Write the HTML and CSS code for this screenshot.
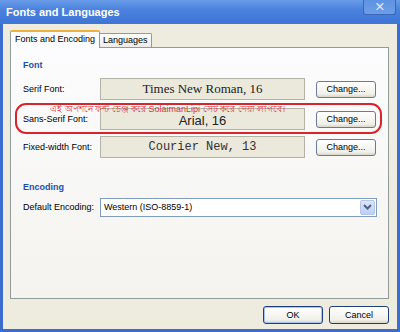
FILE: index.html
```html
<!DOCTYPE html>
<html lang="bn">
<head>
  <meta charset="UTF-8">
  <title>Fonts and Languages</title>
  <link rel="stylesheet" href="styles.css">
</head>
<body>

  <div class="window">
    <div class="titlebar">
      <span class="title">Fonts and Languages</span>
      <span class="close">✕</span>
    </div>

    <div class="client">
      <div class="tabs">
        <div class="tab active">Fonts and Encoding</div>
        <div class="tab">Languages</div>
      </div>

      <div class="panel">
        <div class="group-title">Font</div>

        <div class="row">
          <span class="label">Serif Font:</span>
          <div class="preview serif">Times New Roman, 16</div>
          <button class="btn">Change...</button>
        </div>

        <!-- লাল দাগ দেয়া অংশ -->
        <div class="marked">
          <span class="note">এই অপশনে ফন্ট চেঞ্জ করে SolaimanLipi সেট করে দেয়া লাগবে।</span>
          <div class="row">
            <span class="label">Sans-Serif Font:</span>
            <div class="preview sans">Arial, 16</div>
            <button class="btn">Change...</button>
          </div>
        </div>

        <div class="row">
          <span class="label">Fixed-width Font:</span>
          <div class="preview mono">Courier New, 13</div>
          <button class="btn">Change...</button>
        </div>

        <div class="group-title encoding">Encoding</div>

        <div class="row">
          <span class="label">Default Encoding:</span>
          <div class="select">
            <span>Western (ISO-8859-1)</span>
            <span class="arrow">
              <svg width="9" height="6" viewBox="0 0 9 6"><path d="M1 1 L4.5 4.5 L8 1" fill="none" stroke="#4d6185" stroke-width="2"/></svg>
            </span>
          </div>
        </div>
      </div>

      <div class="actions">
        <button class="btn dlg default">OK</button>
        <button class="btn dlg">Cancel</button>
      </div>
    </div>
  </div>

</body>
</html>
```

FILE: styles.css
```css
* {
  box-sizing: border-box;
}
body {
  margin: 0;
  font-family: 'Liberation Sans', Arial, sans-serif;
  font-size: 9px;
  color: #000;
  background: #fff;
}
.window {
  width: 400px;
  height: 332px;
  display: flex;
  flex-direction: column;
  background: #4a7ad8;
  border: 3px solid #3d6ccf;
  border-top: none;
}
.titlebar {
  height: 24px;
  margin: 0 -3px;
  padding: 0 4px 0 6px;
  display: flex;
  align-items: flex-start;
  justify-content: space-between;
  background: linear-gradient(#6a9ce8, #4a82dd 40%, #3f74d6);
}
.title {
  color: #fff;
  font-weight: bold;
  font-size: 11px;
  margin-top: 6px;
}
.close {
  width: 33px;
  height: 15px;
  border: 1px solid #3a65b8;
  border-top: none;
  border-radius: 0 0 3px 3px;
  background: linear-gradient(#5f92e2, #6c9de6);
  color: #dfe7f8;
  font-size: 10px;
  font-weight: bold;
  text-align: center;
  line-height: 14px;
}
.client {
  flex: 1;
  background: #eeebdf;
  padding: 6px 8px 0 7px;
}
.tabs {
  display: flex;
  align-items: flex-end;
  height: 17px;
  position: relative;
  z-index: 1;
}
.tab {
  height: 14px;
  padding: 0 3px;
  border: 1px solid #919b9c;
  border-bottom: none;
  border-left: none;
  border-radius: 0 2px 0 0;
  background: linear-gradient(#fdfdfb, #ecebe6);
  line-height: 13px;
}
.tab.active {
  height: 18px;
  margin-bottom: -1px;
  padding: 0 4px 0 4px;
  border-left: 1px solid #919b9c;
  border-top: 2px solid #f0b23a;
  border-radius: 2px 2px 0 0;
  background: #fcfcfe;
  line-height: 15px;
}
.panel {
  height: 252px;
  border: 1px solid #919b9c;
  background: linear-gradient(#fcfcfe, #f4f3ee);
  padding: 11px 12px 0 12px;
}
.group-title {
  color: #1f4fa8;
  font-weight: bold;
  height: 12px;
  line-height: 12px;
  margin-bottom: 7px;
}
.group-title.encoding {
  margin-top: 23px;
  margin-bottom: 3px;
}
.row {
  display: flex;
  align-items: center;
  height: 22px;
}
.label {
  width: 77px;
  flex-shrink: 0;
}
.preview {
  width: 205px;
  height: 22px;
  margin-right: 11px;
  background: #ebe8dc;
  border: 1px solid #b4b1a6;
  text-align: center;
  line-height: 20px;
  color: #222;
}
.serif {
  font-family: 'Liberation Serif', 'Times New Roman', serif;
  font-size: 13px;
}
.sans {
  font-family: 'Liberation Sans', Arial, sans-serif;
  font-size: 13px;
  line-height: 24px;
}
.mono {
  font-family: 'Liberation Mono', 'Courier New', monospace;
  font-size: 12px;
  color: #333;
}
.btn {
  width: 60px;
  height: 17px;
  padding: 0;
  font-family: inherit;
  font-size: 9px;
  color: #000;
  background: linear-gradient(#ffffff, #f1f0ea 80%, #d8d5c9);
  border: 1px solid #6a7b95;
  border-radius: 3px;
}
.marked {
  position: relative;
  margin: 3px -6px 2px -8px;
  padding: 3px 4px 2px 6px;
  border: 2px solid #d6262b;
  border-radius: 11px;
}
.note {
  position: absolute;
  left: 33px;
  top: -1px;
  color: #e0343a;
  font-size: 9px;
  line-height: 10px;
  white-space: nowrap;
}
.select {
  flex: 1;
  height: 19px;
  margin-right: -1px;
  display: flex;
  align-items: center;
  justify-content: space-between;
  background: #fff;
  border: 1px solid #7f9db9;
  padding: 0 1px 0 3px;
}
.arrow {
  width: 15px;
  height: 15px;
  display: flex;
  align-items: center;
  justify-content: center;
  background: linear-gradient(#dce6fb, #bccff5);
  border: 1px solid #b3c6ec;
  border-radius: 2px;
}
.actions {
  display: flex;
  justify-content: flex-end;
  gap: 6px;
  margin-top: 7px;
}
.dlg {
  height: 18px;
  border-color: #1d3f7a;
}
.dlg.default {
  box-shadow: inset 0 0 0 1px #a8c4ee;
}
```
